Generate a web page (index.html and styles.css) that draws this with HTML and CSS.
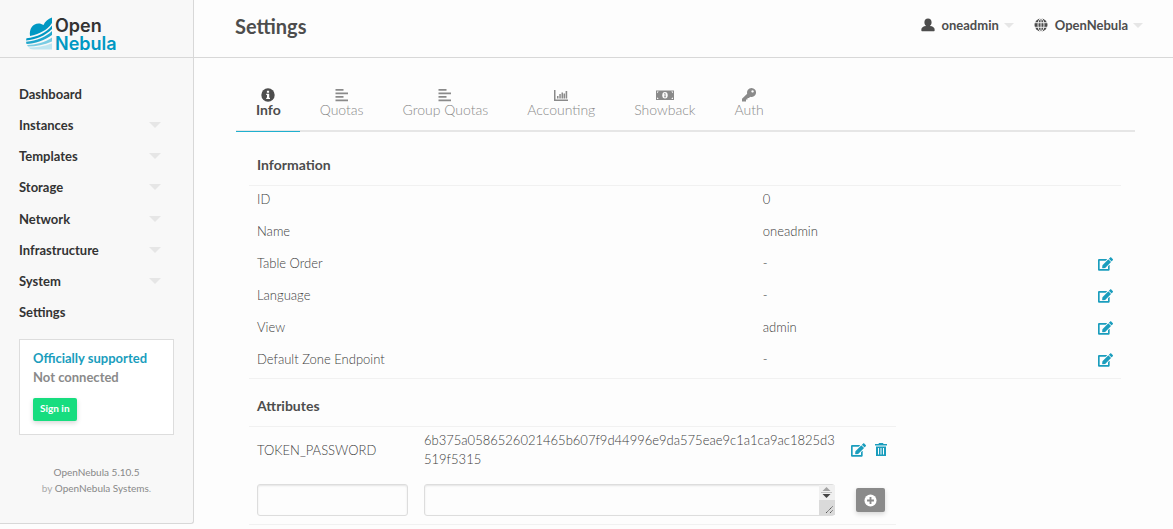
FILE: index.html
```html
<!DOCTYPE html>
<html lang="en">
<head>
<meta charset="utf-8">
<title>Settings</title>
<link rel="stylesheet" href="styles.css">
</head>
<body>
<svg width="0" height="0" class="sprite" aria-hidden="true">
  <symbol id="edit" viewBox="0 0 576 512"><path d="M402.6 83.200l90.200 90.200c3.800 3.800 3.800 10 0 13.800L274.400 405.600l-92.800 10.300c-12.400 1.400-22.900-9.100-21.500-21.500l10.300-92.800L388.800 83.200c3.800-3.800 10-3.800 13.800 0zm162-22.900l-48.800-48.800c-15.200-15.200-39.900-15.200-55.200 0l-35.400 35.400c-3.800 3.800-3.800 10 0 13.800l90.200 90.200c3.800 3.800 10 3.800 13.800 0l35.400-35.400c15.200-15.300 15.200-40 0-55.200zM384 346.200V448H64V128h229.800c3.200 0 6.200-1.300 8.500-3.500l40-40c7.600-7.600 2.200-20.500-8.500-20.500H48C21.500 64 0 85.500 0 112v352c0 26.500 21.500 48 48 48h352c26.500 0 48-21.500 48-48V306.200c0-10.700-12.900-16-20.500-8.500l-40 40c-2.200 2.300-3.500 5.300-3.500 8.500z"/></symbol>
  <symbol id="lines" viewBox="0 0 14 14"><path d="M.5 1h8v1.700h-8zM.5 4.600h12.500v1.700H.5zM.5 8.100h8v1.700h-8zM.5 11.600h12.500v1.700H.5z"/></symbol>
</svg>

<header class="topbar">
  <a class="logo" href="#">
    <svg class="logo-mark" viewBox="0 0 26 32" aria-hidden="true">
      <path fill="#0098c3" d="M4 18.500C3 11 7 6 12.500 6c2 0 3.500.6 5 1.600C19 4 22 1.500 26 0v5.500C21 13 13 16.500 4 18.500z"/>
      <path fill="#0098c3" d="M.5 20.800C11 19.500 20 15.500 26 8v3.500C19 18.500 10 22 0 23z"/>
      <path fill="#1fa6cc" d="M0 24.200c11-1 20-4.700 26-10.700v4C18 23.500 9 26 .5 26.500z"/>
      <path fill="#7accE3" d="M1 27.500c9-.3 18-2.500 25-7.500v4C18 27.500 10 29 2 29z"/>
      <path fill="#bfe6f1" d="M2.500 30c8 0 16-1.200 23.500-4.200V32H8c-3 0-4.500-.8-5.500-2z"/>
    </svg>
    <span class="logo-text"><span class="logo-open">Open</span><span class="logo-nebula">Nebula</span></span>
  </a>
  <div class="topbar-main">
    <h1 class="title">Settings</h1>
    <div class="userbar">
      <button class="dropdown" type="button">
        <svg class="icon-top" viewBox="0 0 14 14" aria-hidden="true"><path d="M7 .5c2.300 0 3.600 1.700 3.600 3.800 0 1.600-.7 3-1.700 3.800 3 .2 4.800 1.500 4.800 3.900 0 .8-.4 1.300-1.200 1.300h-11C.7 13.300.3 12.800.3 12c0-2.400 1.800-3.700 4.800-3.900-1-.8-1.700-2.200-1.700-3.800C3.400 2.200 4.700.5 7 .5z"/></svg>
        oneadmin<span class="caret"></span>
      </button>
      <button class="dropdown" type="button">
        <svg class="icon-top" viewBox="0 0 14 14" aria-hidden="true"><circle cx="7" cy="7" r="6.500"/><path fill="none" stroke="#fdfdfd" stroke-width=".9" d="M0 4.700h14M0 9.300h14M7 0v14"/><ellipse cx="7" cy="7" rx="3" ry="6.500" fill="none" stroke="#fdfdfd" stroke-width=".9"/></svg>
        OpenNebula<span class="caret"></span>
      </button>
    </div>
  </div>
</header>

<div class="layout">
  <aside class="sidebar">
    <nav class="menu">
      <a href="#">Dashboard</a>
      <a href="#">Instances<span class="caret"></span></a>
      <a href="#">Templates<span class="caret"></span></a>
      <a href="#">Storage<span class="caret"></span></a>
      <a href="#">Network<span class="caret"></span></a>
      <a href="#">Infrastructure<span class="caret"></span></a>
      <a href="#">System<span class="caret"></span></a>
      <a href="#">Settings</a>
    </nav>
    <section class="support">
      <a class="support-title" href="#">Officially supported</a>
      <span class="support-state">Not connected</span>
      <button class="signin" type="button">Sign in</button>
    </section>
    <footer class="version">
      <a href="#">OpenNebula 5.10.5</a><br>by <a href="#">OpenNebula Systems</a>.
    </footer>
  </aside>

  <main class="content">
    <nav class="tabs">
      <a class="tab active" href="#"><svg viewBox="0 0 14 14" aria-hidden="true"><circle cx="7" cy="7" r="6.700"/><path fill="#fdfdfd" d="M5.900 2.700h2.200v2H5.900zM5.200 5.700h3v4h.8v1.400H5.200V9.700H6V7.100h-.8z"/></svg>Info</a>
      <a class="tab" href="#"><svg viewBox="0 0 14 14" aria-hidden="true"><use href="#lines"/></svg>Quotas</a>
      <a class="tab" href="#"><svg viewBox="0 0 14 14" aria-hidden="true"><use href="#lines"/></svg>Group Quotas</a>
      <a class="tab" href="#"><svg viewBox="0 0 14 14" aria-hidden="true"><path d="M0 2h1.500v9.500H14V13H0zM3 8h1.500v2.500H3zM5.300 6h1.500v4.500H5.300zM7.500 4.500H9v6H7.500zM9.500 5.500H11v5H9.500zM11.600 3h1.600v7.500h-1.600z"/></svg>Accounting</a>
      <a class="tab" href="#"><svg class="wide" viewBox="0 0 18 14" aria-hidden="true"><rect y="2.500" width="18" height="9.500"/><g fill="#fdfdfd"><ellipse cx="9" cy="7.200" rx="2.700" ry="3.300"/><path d="M1 3.500h1.800L1 5.300zM17 3.500h-1.800L17 5.300zM1 11h1.800L1 9.200zM17 11h-1.800L17 9.200z"/></g><path d="M8.200 5.200h1.300v3.200h.5v.8H8v-.8h.6V6h-.5z"/></svg>Showback</a>
      <a class="tab" href="#"><svg viewBox="0 0 14 14" aria-hidden="true"><path fill-rule="evenodd" d="M9.500 0A4.500 4.500 0 1 1 8.200 8.800L7 10H5.500v1.500H4V13.500H0V10.800L5.200 5.700A4.500 4.500 0 0 1 9.500 0zm1 2.200a1.200 1.200 0 1 0 .1 0z"/></svg>Auth</a>
    </nav>

    <table class="info">
      <colgroup><col class="info-name"><col><col class="info-act"></colgroup>
      <thead><tr><th colspan="3">Information</th></tr></thead>
      <tbody>
        <tr><td>ID</td><td>0</td><td></td></tr>
        <tr><td>Name</td><td>oneadmin</td><td></td></tr>
        <tr><td>Table Order</td><td>-</td><td class="act"><button class="link" type="button" aria-label="Edit table order"><svg class="edit"><use href="#edit"/></svg></button></td></tr>
        <tr><td>Language</td><td>-</td><td class="act"><button class="link" type="button" aria-label="Edit language"><svg class="edit"><use href="#edit"/></svg></button></td></tr>
        <tr><td>View</td><td>admin</td><td class="act"><button class="link" type="button" aria-label="Edit view"><svg class="edit"><use href="#edit"/></svg></button></td></tr>
        <tr><td>Default Zone Endpoint</td><td>-</td><td class="act"><button class="link" type="button" aria-label="Edit default zone endpoint"><svg class="edit"><use href="#edit"/></svg></button></td></tr>
      </tbody>
    </table>

    <table class="attrs">
      <colgroup><col class="attr-name"><col><col class="attr-act"></colgroup>
      <thead><tr><th colspan="3">Attributes</th></tr></thead>
      <tbody>
        <tr>
          <td>TOKEN_PASSWORD</td>
          <td class="value">6b375a0586526021465b607f9d44996e9da575eae9c1a1ca9ac1825d3519f5315</td>
          <td><div class="actions">
            <button class="link" type="button" aria-label="Edit"><svg class="edit"><use href="#edit"/></svg></button>
            <button class="link" type="button" aria-label="Delete"><svg class="trash" viewBox="0 0 12 14"><path fill-rule="evenodd" d="M0 1h3.500l.5-1h4l.5 1H12v1.600H0zM1 3.500h10V13H1zM3 5v6.500h1V5zM5.500 5v6.500h1V5zM8 5v6.500h1V5z"/></svg></button>
          </div></td>
        </tr>
        <tr class="new">
          <td><input type="text" aria-label="Attribute name"></td>
          <td><div class="area"><textarea rows="1" aria-label="Attribute value"></textarea>
            <svg class="scroll" viewBox="0 0 16 30" aria-hidden="true"><path fill="#f0f0f0" d="M0 0h16v15H0z"/><path fill="#dadada" d="M0 15h16v15H0z"/><path fill="#a3a3a3" d="M3.500 6L7.500 2l4 4z"/><path fill="#c4c4c4" d="M2 7h11v1H2z"/><path fill="#444" d="M3.500 9h8l-4 4z"/><path stroke="#555" fill="none" stroke-dasharray="1.400 .5" d="M7 28l7-7M11 28l3-3"/></svg></div></td>
          <td><button class="add" type="button" aria-label="Add attribute"><svg viewBox="0 0 14 14"><circle cx="7" cy="7" r="6.500" fill="#fff"/><path fill="#8a8a8a" d="M6 3.300h2V6h2.700v2H8v2.700H6V8H3.300V6H6z"/></svg></button></td>
        </tr>
      </tbody>
    </table>
  </main>
</div>
</body>
</html>
```
FILE: styles.css
```css
* { box-sizing: border-box; }
body {
  margin: 0;
  background: #fdfdfd;
  color: #4d4d4d;
  font: 300 14px/18px Lato, sans-serif;
}
a { color: inherit; text-decoration: none; }
button { font-family: inherit; border: 0; cursor: pointer; }
.sprite { display: none; }
svg { fill: currentColor; }

.topbar {
  display: flex;
  height: 58px;
  border-bottom: 1px solid #d8d8d8;
}
.logo {
  flex: none;
  display: flex;
  gap: 3px;
  width: 194px;
  padding: 17px 0 0 26px;
  background: #f8f8f8;
  border-right: 1px solid #d8d8d8;
}
.logo-mark { width: 26px; height: 33px; }
.logo-text {
  display: flex;
  flex-direction: column;
  font: 600 18px/18px Inter, sans-serif;
}
.logo-open { color: #333; }
.logo-nebula { color: #0098c3; }
.topbar-main {
  flex: 1;
  display: flex;
  justify-content: space-between;
  padding: 14px 30px 0 41px;
}
.title { margin: 0; font-size: 20px; line-height: 25px; font-weight: 700; }
.userbar { display: flex; align-items: flex-start; gap: 20px; }
.dropdown {
  display: flex;
  align-items: center;
  padding: 2px 0;
  background: none;
  color: #4d4d4d;
  font-size: 13px;
  line-height: 18px;
  font-weight: 700;
}
.icon-top { width: 14px; height: 14px; margin-right: 7px; }
.caret {
  border: 6px solid transparent;
  border-top-color: #e6e6e6;
  border-bottom: 0;
}
.dropdown .caret { margin-left: 5px; border-width: 5px 5px 0; }

.layout { display: flex; align-items: flex-start; }
.sidebar {
  flex: none;
  width: 194px;
  padding: 20px 19px 27px;
  background: #f8f8f8;
  border-right: 1px solid #d8d8d8;
  border-bottom: 1px solid #d8d8d8;
  border-bottom-right-radius: 3px;
}
.menu {
  display: grid;
  grid-auto-rows: 1fr;
  height: 250px;
  color: #333;
  font-size: 13px;
  font-weight: 700;
}
.menu a { display: flex; align-items: center; justify-content: space-between; padding-right: 13px; }
.support {
  display: flex;
  flex-direction: column;
  align-items: flex-start;
  margin-top: 11px;
  padding: 9px 13px 13px;
  background: #fff;
  border: 1px solid #ddd;
  font-size: 13px;
  line-height: 19px;
  font-weight: 700;
}
.support-title { color: #1a9dbd; }
.support-state { color: #8a8a8a; }
.signin {
  margin-top: 11px;
  padding: 0 7px 2px;
  border-radius: 2px;
  background: #17dd7f;
  color: #fff;
  font-size: 10px;
  line-height: 21px;
  font-weight: 700;
  box-shadow: 0 2px 5px rgba(0, 0, 0, .16);
}
.version {
  margin-top: 29px;
  text-align: center;
  font-size: 10px;
  line-height: 16px;
  font-weight: 400;
  color: #aaa;
}
.version a { color: #888; }

.content { flex: 1; min-width: 0; padding: 30px 38px 0 42px; }
.tabs { display: flex; border-bottom: 2px solid #e6e6e6; }
.tab {
  display: flex;
  flex-direction: column;
  align-items: center;
  height: 44px;
  margin-bottom: -2px;
  padding: 0 19px 0 20px;
  color: #8a8a8a;
  line-height: 16px;
}
.tab svg { height: 14px; width: 14px; }
.tab .wide { width: 18px; }
.tab.active { color: #4d4d4d; font-weight: 700; border-bottom: 1px solid #1fb0cf; }

table { border-collapse: separate; border-spacing: 0; table-layout: fixed; }
th {
  padding: 9px 8px 11px;
  text-align: left;
  font-size: 14px;
  line-height: 18px;
  font-weight: 700;
  border-bottom: 1px solid #f1f1f1;
}
tbody tr:last-child td { border-bottom: 1px solid #f1f1f1; }
td { padding: 4px 8px 10px; font-size: 13px; line-height: 18px; color: #404040; }
.info { width: calc(100% - 27px); margin: 15px 0 0 13px; }
.info-name { width: 58%; }
.info-act { width: 12%; }
.info .act { text-align: right; }
.link { display: inline-flex; padding: 0; background: none; color: #1a9dbd; vertical-align: top; }
.edit { width: 15px; height: 14px; }
.info .link { margin-top: 3px; }
.trash { width: 12px; height: 14px; }
.attrs { width: 72%; margin: 9px 0 0 13px; }
.attr-name { width: 167px; }
.attr-act { width: 53px; }
.attrs td { padding: 4px 8px 10px; line-height: 19px; vertical-align: middle; }
.attrs td:last-child { padding-left: 13px; padding-right: 0; }
.attrs .value { overflow-wrap: anywhere; }
.actions { display: flex; gap: 9px; margin-left: -5px; }
.attrs .new td { padding-top: 5px; padding-bottom: 8px; }
input, textarea {
  display: block;
  width: 100%;
  height: 32px;
  padding: 6px 8px;
  border: 1px solid #ddd;
  border-radius: 3px;
  background: #fdfdfd;
  font: inherit;
  box-shadow: inset 0 1px 2px rgba(0, 0, 0, .1);
}
textarea { resize: none; overflow: hidden; }
.area { position: relative; }
.scroll { position: absolute; top: 1px; right: 0; width: 16px; height: 30px; }
.add {
  display: flex;
  align-items: center;
  justify-content: center;
  width: 29px;
  height: 24px;
  padding: 0;
  border-radius: 2px;
  background: #8a8a8a;
  box-shadow: 0 2px 5px rgba(0, 0, 0, .16);
}
.add svg { width: 13px; height: 13px; }
```
